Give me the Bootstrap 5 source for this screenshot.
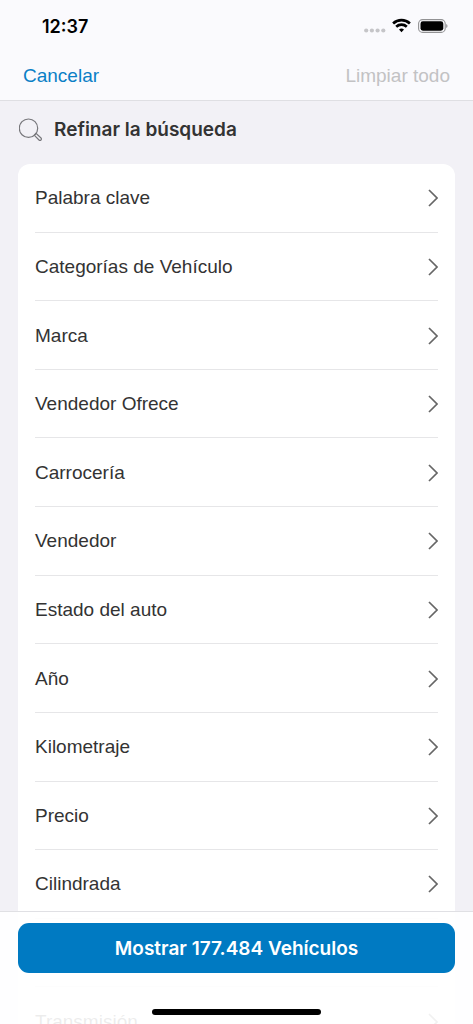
<!DOCTYPE html>
<html lang="es">
<head>
<meta charset="utf-8">
<meta name="viewport" content="width=device-width, initial-scale=1">
<title>Refinar la búsqueda</title>
<link href="https://cdn.jsdelivr.net/npm/bootstrap@5.3.0/dist/css/bootstrap.min.css" rel="stylesheet">
<style>
  body { font-family: "Liberation Sans", Arial, sans-serif; font-size: 19px; line-height: 24px; color: #333; background: #f2f1f6; }
  .top-bar { background: #fafafd; border-bottom: 1px solid #dfdfe3; }
  .status-bar { height: 52px; padding: 0 25px 0 42px; color: #000; }
  .clock, .heading h1, .btn-show { font-family: Inter, "Liberation Sans", sans-serif; font-weight: 600; }
  .clock { font-size: 18px; padding-top: 2px; }
  .actions { height: 48px; padding: 0 23px; }
  .actions .btn { --bs-btn-padding-x: 0; --bs-btn-padding-y: 0; --bs-btn-border-width: 0; font-size: 19px; line-height: 24px; }
  .btn-cancel, .btn-cancel:hover { color: #0a7fc6; }
  .btn-clear:disabled { color: #c2c2c4; opacity: 1; }
  .scroller { min-height: 0; padding: 0 18px; scrollbar-width: none; }
  .heading { height: 63px; padding: 0 1px 5px; gap: 12px; }
  .heading h1 { font-size: 19px; line-height: 24px; }
  .filters { display: grid; grid-auto-rows: 1fr; min-height: 892px; padding: 0 17px; border-radius: 12px; background: #fff; }
  .filters li { display: grid; border-bottom: 1px solid #e6e6e8; }
  .filters a { color: #333; padding-top: 1px; }
  .bottom-bar { height: 113px; padding: 11px 18px 9px; background: rgba(255, 255, 255, .91); border-top: 1px solid #e0e0e4; }
  .btn-show, .btn-show:hover { height: 50px; padding: 2px 0 0; border: 0; border-radius: 11px; background: #007ac2; color: #fff; font-size: 19px; }
  .home-bar { width: 169px; height: 6px; border-radius: 3px; background: #000; }
</style>
</head>
<body class="vh-100 overflow-hidden d-flex flex-column">
<svg class="d-none" aria-hidden="true">
  <symbol id="chevron" viewBox="0 0 10 18"><path d="M1 1l8 8-8 8" fill="none" stroke="#666" stroke-width="1.7"/></symbol>
</svg>

<header class="top-bar flex-shrink-0">
  <div class="status-bar d-flex align-items-center justify-content-between">
    <span class="clock">12:37</span>
    <svg width="84" height="18" viewBox="0 0 84 18" aria-hidden="true">
      <g fill="#c5c5c8"><circle cx="2.2" cy="13.5" r="2.1"/><circle cx="7.9" cy="13.5" r="2.1"/><circle cx="13.6" cy="13.5" r="2.1"/><circle cx="19.3" cy="13.5" r="2.1"/></g>
      <g fill="none" stroke="#000" stroke-width="2.7"><path d="M29.1 6.5a12.3 12.3 0 0 1 16.8 0"/><path d="M32.2 9.8a7.8 7.8 0 0 1 10.6 0"/></g>
      <path d="M37.5 15.2l-2.5-2.6a3.7 3.7 0 0 1 5 0z"/>
      <rect x="54.6" y="2.6" width="26.6" height="12.8" rx="4" fill="none" stroke="#929294" stroke-width="1.1"/>
      <rect x="56.5" y="4.3" width="22.8" height="9.4" rx="2.4"/>
      <path d="M82.2 7v4q1.3-.6 1.3-2t-1.3-2z" fill="#929294"/>
    </svg>
  </div>
  <div class="actions d-flex align-items-center justify-content-between">
    <button type="button" class="btn btn-cancel">Cancelar</button>
    <button type="button" class="btn btn-clear" disabled>Limpiar todo</button>
  </div>
</header>

<main class="scroller flex-grow-1 overflow-auto">
  <div class="heading d-flex align-items-center">
    <svg width="23" height="24" viewBox="0 0 23 24" fill="none" stroke="#77777b" stroke-width="1.2" aria-hidden="true">
      <circle cx="9.5" cy="10.2" r="9.2"/>
      <path d="M15.2 17.2l1.8-1.8 5 4.6a1.4 1.4 0 0 1 0 2 1.4 1.4 0 0 1-2 0l-4.8-4.8"/>
    </svg>
    <h1 class="mb-0">Refinar la búsqueda</h1>
  </div>
  <ul class="filters list-unstyled mb-0">
    <li><a href="#" class="d-flex align-items-center justify-content-between text-decoration-none">Palabra clave<svg width="10" height="18"><use href="#chevron"/></svg></a></li>
    <li><a href="#" class="d-flex align-items-center justify-content-between text-decoration-none">Categorías de Vehículo<svg width="10" height="18"><use href="#chevron"/></svg></a></li>
    <li><a href="#" class="d-flex align-items-center justify-content-between text-decoration-none">Marca<svg width="10" height="18"><use href="#chevron"/></svg></a></li>
    <li><a href="#" class="d-flex align-items-center justify-content-between text-decoration-none">Vendedor Ofrece<svg width="10" height="18"><use href="#chevron"/></svg></a></li>
    <li><a href="#" class="d-flex align-items-center justify-content-between text-decoration-none">Carrocería<svg width="10" height="18"><use href="#chevron"/></svg></a></li>
    <li><a href="#" class="d-flex align-items-center justify-content-between text-decoration-none">Vendedor<svg width="10" height="18"><use href="#chevron"/></svg></a></li>
    <li><a href="#" class="d-flex align-items-center justify-content-between text-decoration-none">Estado del auto<svg width="10" height="18"><use href="#chevron"/></svg></a></li>
    <li><a href="#" class="d-flex align-items-center justify-content-between text-decoration-none">Año<svg width="10" height="18"><use href="#chevron"/></svg></a></li>
    <li><a href="#" class="d-flex align-items-center justify-content-between text-decoration-none">Kilometraje<svg width="10" height="18"><use href="#chevron"/></svg></a></li>
    <li><a href="#" class="d-flex align-items-center justify-content-between text-decoration-none">Precio<svg width="10" height="18"><use href="#chevron"/></svg></a></li>
    <li><a href="#" class="d-flex align-items-center justify-content-between text-decoration-none">Cilindrada<svg width="10" height="18"><use href="#chevron"/></svg></a></li>
    <li></li>
    <li><a href="#" class="d-flex align-items-center justify-content-between text-decoration-none">Transmisión<svg width="10" height="18"><use href="#chevron"/></svg></a></li>
  </ul>
</main>

<footer class="bottom-bar fixed-bottom d-flex flex-column justify-content-between align-items-center">
  <button type="button" class="btn btn-show w-100">Mostrar 177.484 Vehículos</button>
  <div class="home-bar"></div>
</footer>
<script src="https://cdn.jsdelivr.net/npm/bootstrap@5.3.0/dist/js/bootstrap.bundle.min.js"></script>
</body>
</html>
